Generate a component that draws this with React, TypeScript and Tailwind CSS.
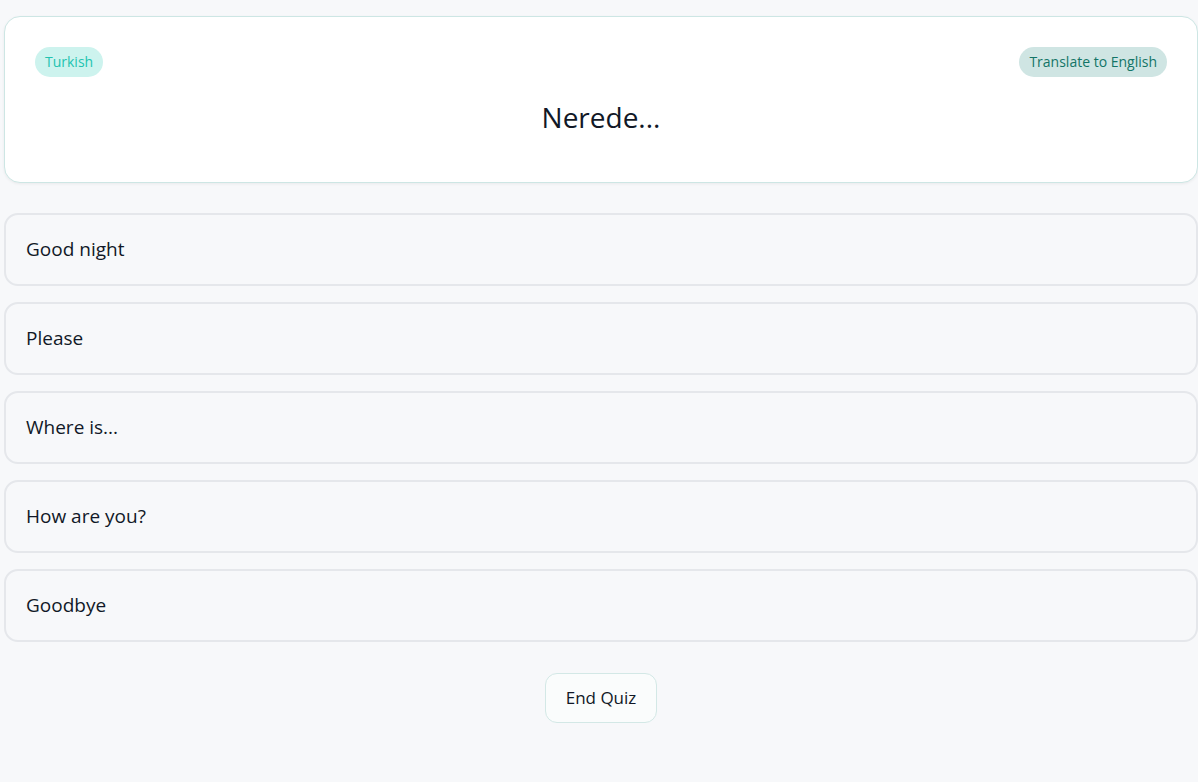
import React from "react";

const options = ["Good night", "Please", "Where is...", "How are you?", "Goodbye"];

export default function App() {
  return (
    <div className="min-h-[782px] bg-[#f7f8fa] pl-1 pt-4 font-['Open_Sans',sans-serif] text-[#111827]">
      <div className="rounded-2xl border border-[#cde6e4] bg-white px-[30px] pb-[47px] pt-[30px] shadow-[0_1px_3px_rgba(0,0,0,0.06)]">
        <div className="flex items-center justify-between">
          <span className="rounded-full bg-[#cdf3ee] px-[10px] py-[5px] text-sm text-[#22c3b0]">Turkish</span>
          <span className="rounded-full bg-[#cfe5e3] px-[10px] py-[5px] text-sm text-[#137567]">Translate to English</span>
        </div>
        <div className="mt-[22px] text-center text-[28px] leading-9">Nerede...</div>
      </div>
      <div className="mt-[30px] flex flex-col gap-4">
        {options.map((o) => (
          <div key={o} className="flex h-[73px] items-center rounded-[14px] border-2 border-[#e5e7eb] px-5 text-[19px]">
            {o}
          </div>
        ))}
      </div>
      <div className="mt-[31px] flex justify-center">
        <button className="h-[50px] w-[112px] rounded-xl border border-[#d3e8e6] bg-[#fafcfc] text-[17px]">End Quiz</button>
      </div>
    </div>
  );
}
